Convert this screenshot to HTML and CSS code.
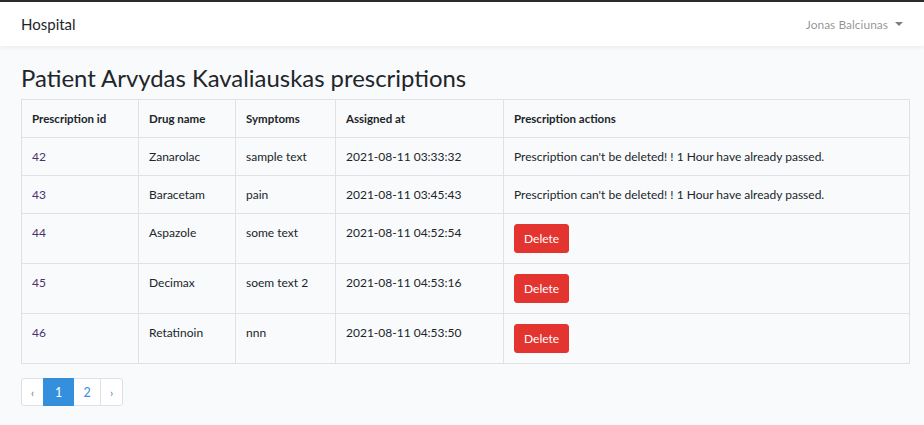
FILE: index.html
```html
<!DOCTYPE html>
<html lang="en">
<head>
<meta charset="utf-8">
<title>Hospital</title>
<link rel="stylesheet" href="styles.css">
</head>
<body>
<header class="navbar">
  <a class="brand" href="#">Hospital</a>
  <a class="user" href="#">Jonas Balciunas <span class="caret"></span></a>
</header>
<main class="content">
  <h3 class="title">Patient Arvydas Kavaliauskas prescriptions</h3>
  <table class="grid">
    <colgroup>
      <col class="c1"><col class="c2"><col class="c3"><col class="c4"><col class="c5">
    </colgroup>
    <thead>
      <tr><th>Prescription id</th><th>Drug name</th><th>Symptoms</th><th>Assigned at</th><th>Prescription actions</th></tr>
    </thead>
    <tbody>
      <tr><td class="id">42</td><td>Zanarolac</td><td>sample text</td><td>2021-08-11 03:33:32</td><td>Prescription can't be deleted! ! 1 Hour have already passed.</td></tr>
      <tr><td class="id">43</td><td>Baracetam</td><td>pain</td><td>2021-08-11 03:45:43</td><td>Prescription can't be deleted! ! 1 Hour have already passed.</td></tr>
      <tr><td class="id">44</td><td>Aspazole</td><td>some text</td><td>2021-08-11 04:52:54</td><td class="act"><button class="btn-danger">Delete</button></td></tr>
      <tr><td class="id">45</td><td>Decimax</td><td>soem text 2</td><td>2021-08-11 04:53:16</td><td class="act"><button class="btn-danger">Delete</button></td></tr>
      <tr><td class="id">46</td><td>Retatinoin</td><td>nnn</td><td>2021-08-11 04:53:50</td><td class="act"><button class="btn-danger">Delete</button></td></tr>
    </tbody>
  </table>
  <nav class="pager">
    <span class="pg arrow">&lsaquo;</span>
    <span class="pg active">1</span>
    <a class="pg num" href="#">2</a>
    <a class="pg arrow" href="#">&rsaquo;</a>
  </nav>
</main>
</body>
</html>
```
FILE: styles.css
```css
html, body {
  margin: 0;
  padding: 0;
}
body {
  background: #f8fafc;
  font-family: "Lato", "Noto Sans", sans-serif;
  color: #212529;
  font-size: 12px;
  border-top: 2px solid #2b2b2b;
}
a { text-decoration: none; }

.navbar {
  height: 44px;
  background: #fff;
  box-shadow: 0 2px 4px rgba(0,0,0,.05);
  display: flex;
  align-items: center;
  justify-content: space-between;
  padding: 0 21px;
}
.brand {
  color: #212529;
  font-size: 15px;
}
.user {
  color: rgba(0,0,0,.45);
  font-size: 12px;
  display: flex;
  align-items: center;
}
.caret {
  display: inline-block;
  margin-left: 7px;
  border-top: 4px solid rgba(0,0,0,.5);
  border-left: 4px solid transparent;
  border-right: 4px solid transparent;
}

.content {
  padding: 18px 15px 0 21px;
}
.title {
  margin: 0 0 8px;
  font-weight: 400;
  font-size: 23.9px;
  line-height: 27px;
}

.grid {
  border-collapse: collapse;
  width: 888px;
  table-layout: fixed;
}
.c1 { width: 117px; }
.c2 { width: 97px; }
.c3 { width: 100px; }
.c4 { width: 168px; }
.c5 { width: 406px; }
.grid th, .grid td {
  border: 1px solid #dee2e6;
  padding: 11px 10px 10px;
  line-height: 16px;
  text-align: left;
  vertical-align: top;
  white-space: nowrap;
}
.grid th { font-weight: 700; font-size: 11.5px; }
.grid td { font-size: 12px; }
.grid td.id { color: #4f2f70; }
.grid td.act { padding: 10px 10px 10px; }

.btn-danger {
  background: #e3342f;
  color: #fff;
  border: 1px solid #e3342f;
  border-radius: 3px;
  font-family: inherit;
  font-size: 12px;
  height: 29px;
  padding: 0 9px;
  line-height: 27px;
  cursor: pointer;
}

.pager {
  display: flex;
  margin-top: 14px;
}
.pg {
  display: flex;
  align-items: center;
  justify-content: center;
  height: 26px;
  border: 1px solid #dee2e6;
  margin-left: -1px;
  background: #fff;
  font-size: 12.5px;
  color: #3490dc;
}
.pg:first-child { margin-left: 0; border-radius: 3px 0 0 3px; }
.pg:last-child { border-radius: 0 3px 3px 0; }
.arrow { width: 21px; color: #6c757d; font-size: 11px; }
.arrow:last-child { color: #3490dc; }
.active { width: 29px; background: #3490dc; border-color: #3490dc; color: #fff; position: relative; z-index: 1; }
.num { width: 26px; }
```
